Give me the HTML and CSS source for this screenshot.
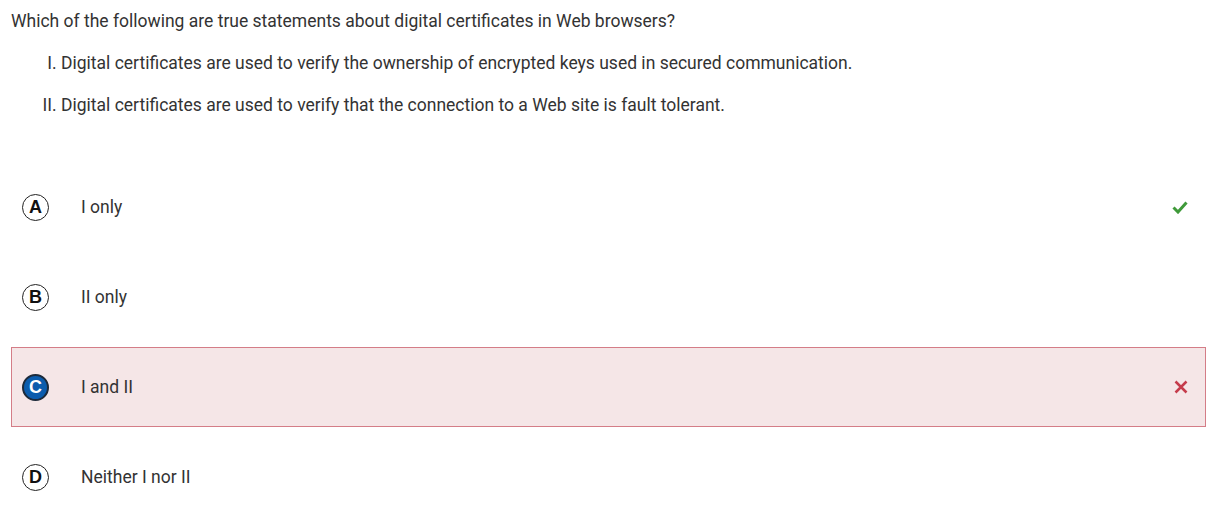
FILE: index.html
```html
<!DOCTYPE html>
<html>
<head>
<meta charset="utf-8">
<link rel="stylesheet" href="styles.css">
</head>
<body>
<div class="question">
  <p class="stem">Which of the following are true statements about digital certificates in Web browsers?</p>
  <ol class="statements">
    <li>Digital certificates are used to verify the ownership of encrypted keys used in secured communication.</li>
    <li>Digital certificates are used to verify that the connection to a Web site is fault tolerant.</li>
  </ol>
  <div class="options">
    <div class="option">
      <span class="letter">A</span>
      <span class="label">I only</span>
      <svg class="mark" width="16" height="14" viewBox="0 0 16 14"><path d="M1.5 7.5 L6 12 L14.5 2.5" fill="none" stroke="#3f9a3a" stroke-width="3"/></svg>
    </div>
    <div class="option">
      <span class="letter">B</span>
      <span class="label">II only</span>
    </div>
    <div class="option wrong">
      <span class="letter selected">C</span>
      <span class="label">I and II</span>
      <svg class="mark" width="14" height="14" viewBox="0 0 14 14"><path d="M1.5 1.5 L12.5 12.5 M12.5 1.5 L1.5 12.5" fill="none" stroke="#c53c4c" stroke-width="2.5"/></svg>
    </div>
    <div class="option">
      <span class="letter">D</span>
      <span class="label">Neither I nor II</span>
    </div>
  </div>
</div>
</body>
</html>
```
FILE: styles.css
```css
html, body {
  margin: 0;
  padding: 0;
  background: #fff;
}
body {
  font-family: Roboto, "Liberation Sans", sans-serif;
  font-size: 17.5px;
  color: #333;
}
.question {
  padding: 9px 14px 0 11px;
}
.stem {
  margin: 0;
  line-height: 24px;
}
.statements {
  list-style: upper-roman;
  margin: 18px 0 0;
  padding-left: 50px;
}
.statements li {
  line-height: 24px;
  margin-bottom: 18px;
}
.options {
  margin-top: 50px;
  display: flex;
  flex-direction: column;
  gap: 10px;
}
.option {
  height: 80px;
  box-sizing: border-box;
  border: 1px solid transparent;
  display: flex;
  align-items: center;
  padding-left: 10px;
  padding-right: 17px;
}
.option.wrong {
  background: #f5e6e7;
  border-color: #d47d87;
}
.letter {
  width: 27px;
  height: 27px;
  box-sizing: border-box;
  border: 1.5px solid #222;
  border-radius: 50%;
  display: flex;
  align-items: center;
  justify-content: center;
  font-family: "Liberation Sans", Arial, sans-serif;
  font-weight: bold;
  font-size: 18px;
  color: #111;
  flex: none;
}
.letter.selected {
  background: #0b5cad;
  color: #fff;
  border: 2px solid #1d2a3a;
}
.label {
  margin-left: 32px;
  flex: 1;
}
.mark {
  flex: none;
}
```
